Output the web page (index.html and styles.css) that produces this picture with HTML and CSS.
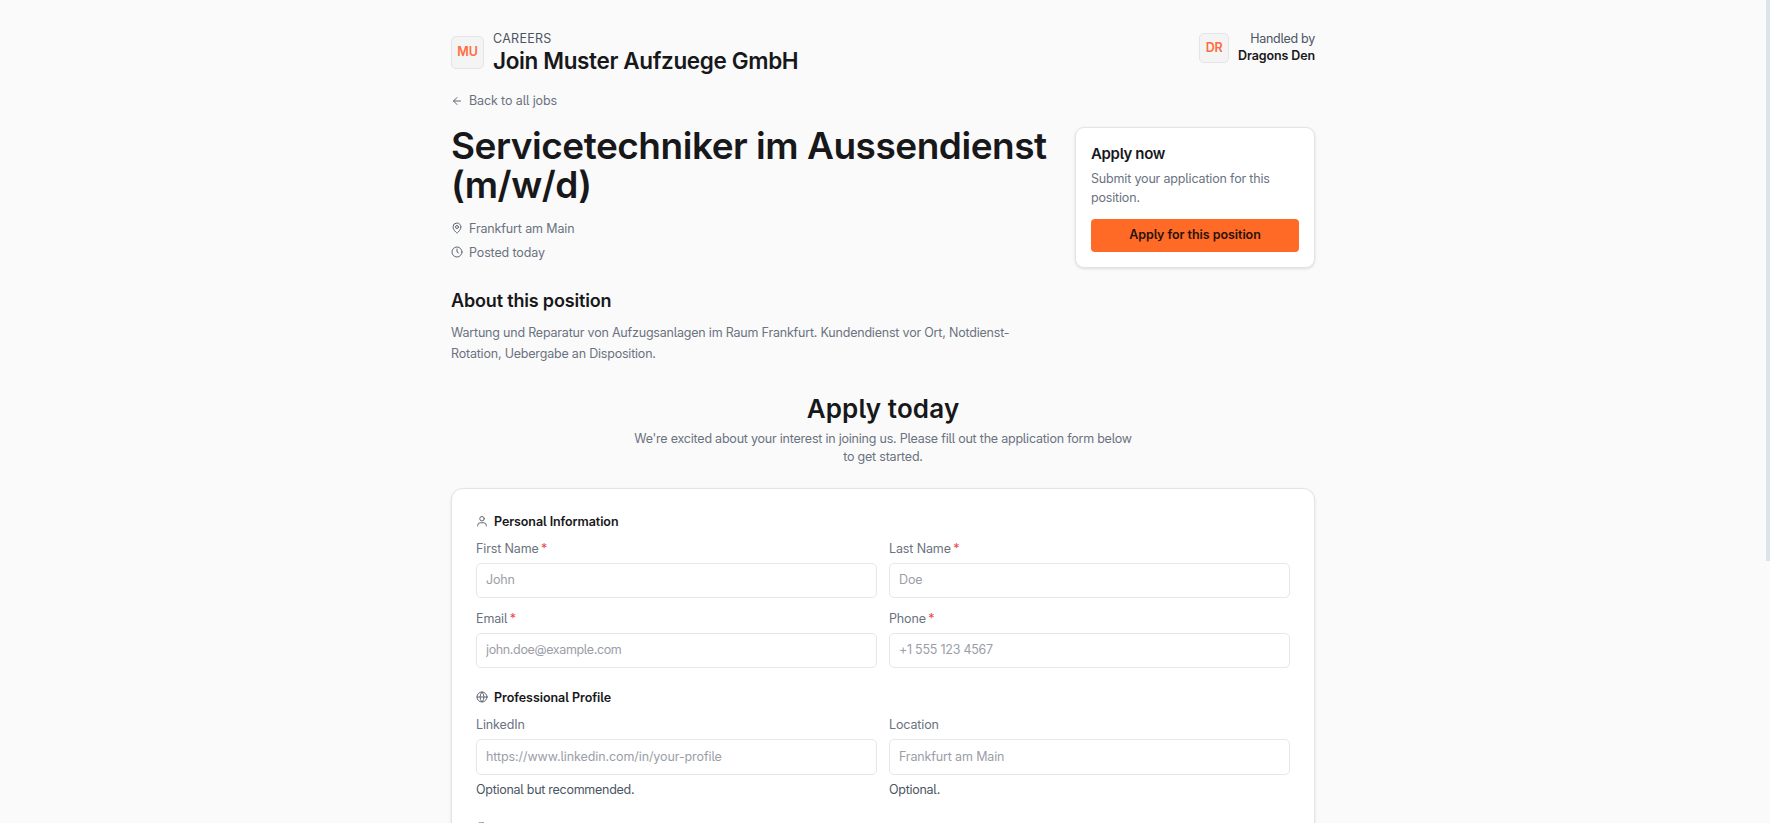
FILE: index.html
```
<!DOCTYPE html>
<html lang="en">
<head>
<meta charset="utf-8">
<title>Servicetechniker im Aussendienst (m/w/d)</title>
<link rel="stylesheet" href="styles.css">
</head>
<body>
<div class="page">
  <header class="header">
    <div class="brand">
      <div class="logo">MU</div>
      <div>
        <div class="eyebrow">CAREERS</div>
        <div class="company">Join Muster Aufzuege GmbH</div>
      </div>
    </div>
    <div class="handler">
      <div class="logo logo-small">DR</div>
      <div class="handler-text">
        <div class="handler-label">Handled by</div>
        <div class="handler-name">Dragons Den</div>
      </div>
    </div>
  </header>

  <a class="back">
    <svg class="icon" viewBox="0 0 24 24"><path d="m12 19-7-7 7-7"/><path d="M19 12H5"/></svg>
    <span>Back to all jobs</span>
  </a>

  <main>
    <div class="job">
      <div>
        <h1>Servicetechniker im Aussendienst (m/w/d)</h1>
        <div class="meta">
          <svg class="icon" viewBox="0 0 24 24"><path d="M20 10c0 4.993-5.539 10.193-7.399 11.799a1 1 0 0 1-1.202 0C9.539 20.193 4 14.993 4 10a8 8 0 0 1 16 0"/><circle cx="12" cy="10" r="3"/></svg>
          <span>Frankfurt am Main</span>
        </div>
        <div class="meta">
          <svg class="icon" viewBox="0 0 24 24"><circle cx="12" cy="12" r="10"/><path d="M12 6v6l3 2"/></svg>
          <span>Posted today</span>
        </div>
        <h2 class="about-title">About this position</h2>
        <p class="about-text">Wartung und Reparatur von Aufzugsanlagen im Raum Frankfurt. Kundendienst vor Ort, Notdienst-<br>Rotation, Uebergabe an Disposition.</p>
      </div>
      <aside class="apply-card">
        <h3>Apply now</h3>
        <p>Submit your application for this position.</p>
        <button class="apply-button" type="button">Apply for this position</button>
      </aside>
    </div>

    <div class="intro">
      <h2>Apply today</h2>
      <p>We're excited about your interest in joining us. Please fill out the application form below<br>to get started.</p>
    </div>

    <form class="form">
      <section>
        <h4><svg class="icon" viewBox="0 0 24 24"><circle cx="12" cy="7.500" r="4.500"/><path d="M3.500 22v-1.500a5 5 0 0 1 5-5h7a5 5 0 0 1 5 5V22"/></svg><span>Personal Information</span></h4>
        <div class="fields">
          <div class="field"><label for="first">First Name <b>*</b></label><input id="first" placeholder="John"></div>
          <div class="field"><label for="last">Last Name <b>*</b></label><input id="last" placeholder="Doe"></div>
          <div class="field"><label for="email">Email <b>*</b></label><input id="email" class="input-email" placeholder="john.doe@example.com"></div>
          <div class="field"><label for="phone">Phone <b>*</b></label><input id="phone" class="input-phone" placeholder="+1 555 123 4567"></div>
        </div>
      </section>
      <section>
        <h4 class="profile-title"><svg class="icon" viewBox="0 0 24 24"><circle cx="12" cy="12" r="10"/><path d="M12 2a14.500 14.500 0 0 0 0 20 14.500 14.500 0 0 0 0-20"/><path d="M2 12h20"/></svg><span>Professional Profile</span></h4>
        <div class="fields fields-tall">
          <div class="field"><label for="linkedin">LinkedIn</label><input id="linkedin" class="input-url" placeholder="https://www.linkedin.com/in/your-profile"><div class="hint">Optional but recommended.</div></div>
          <div class="field"><label for="location">Location</label><input id="location" placeholder="Frankfurt am Main"><div class="hint">Optional.</div></div>
        </div>
      </section>
      <section class="documents">
        <h4><svg class="icon" viewBox="0 0 24 24"><path d="M15 2H6a2 2 0 0 0-2 2v16a2 2 0 0 0 2 2h12a2 2 0 0 0 2-2V7Z"/><path d="M14 2v4a2 2 0 0 0 2 2h4"/></svg><span>Documents</span></h4>
      </section>
    </form>
  </main>
</div>
<div class="scroll-thumb"></div>
</body>
</html>
```
FILE: styles.css
```
* { box-sizing: border-box; }
html { height: 100%; overflow: hidden; }
body {
  height: 100%;
  margin: 0;
  overflow: hidden;
  background: #fafafa;
  color: #18181b;
  font-family: Inter, "Liberation Sans", sans-serif;
  font-feature-settings: "cv05";
  font-size: 12.5px;
  line-height: 17px;
  letter-spacing: -0.13px;
}
h1, h2, h3, h4, p { margin: 0; font-weight: 600; }
p { font-weight: 400; color: #6b7280; }

.page { width: 864px; margin: 0 0 0 451px; padding-top: 30px; }

.header { display: flex; justify-content: space-between; align-items: flex-start; }
.brand { display: flex; gap: 9px; }
.logo {
  display: flex;
  align-items: center;
  justify-content: center;
  width: 33px;
  height: 33px;
  margin-top: 6px;
  padding-bottom: 2px;
  border: 1px solid #e4e4e7;
  border-radius: 5px;
  background: #f4f4f5;
  color: #ff6b3d;
  font-weight: 600;
  letter-spacing: -0.2px;
}
.logo-small { width: 30px; height: 30px; margin-top: 3px; }
.eyebrow { color: #4b5563; letter-spacing: 0.28px; }
.company { padding-top: 1px; font-size: 22.5px; line-height: 25px; font-weight: 600; letter-spacing: -0.36px; }
.handler { display: flex; gap: 9px; text-align: right; }
.handler-label { color: #4b5563; letter-spacing: -0.27px; }
.handler-name { font-weight: 600; letter-spacing: -0.12px; }

.icon {
  width: 12px;
  height: 12px;
  flex: none;
  fill: none;
  stroke: #5f6673;
  stroke-width: 2;
  stroke-linecap: round;
  stroke-linejoin: round;
}
.back {
  display: flex;
  align-items: center;
  gap: 6px;
  margin-top: 19px;
  color: #6b7280;
  letter-spacing: -0.12px;
}

.job {
  display: grid;
  grid-template-columns: 597px 240px;
  justify-content: space-between;
  align-items: start;
  margin-top: 18px;
}
h1 { margin: -1px -10px 12px 0; font-size: 37px; line-height: 39px; letter-spacing: -0.48px; }
.meta { display: flex; align-items: center; gap: 6px; height: 24px; color: #6b7280; }
.about-title { margin-top: 26px; font-size: 18px; line-height: 22px; letter-spacing: -0.17px; }
.about-text { margin-top: 10px; line-height: 21px; letter-spacing: -0.2px; }

.apply-card {
  padding: 16px 15px 15px;
  border: 1px solid #e4e4e7;
  border-radius: 9px;
  background: #fff;
  box-shadow: 0 1px 3px rgba(0, 0, 0, 0.12);
}
.apply-card h3 { font-size: 15px; line-height: 20px; letter-spacing: -0.33px; }
.apply-card p { margin-top: 5px; line-height: 19px; letter-spacing: -0.17px; }
.apply-button {
  width: 100%;
  height: 33px;
  margin-top: 12px;
  padding: 0 0 2px;
  border: 0;
  border-radius: 4px;
  background: #ff6b26;
  color: #2a1208;
  font: inherit;
  font-weight: 600;
  font-feature-settings: inherit;
  letter-spacing: -0.05px;
}

.intro { margin-top: 30px; text-align: center; }
.intro h2 { font-size: 26px; line-height: 30px; letter-spacing: 0.15px; }
.intro p { margin-top: 6px; line-height: 18.3px; letter-spacing: -0.22px; }

.form {
  display: flex;
  flex-direction: column;
  gap: 21px;
  margin-top: 21px;
  padding: 24px;
  border: 1px solid #e4e4e7;
  border-radius: 12px;
  background: #fff;
  box-shadow: 0 1px 3px rgba(0, 0, 0, 0.1);
}
h4 { display: flex; align-items: center; gap: 6px; letter-spacing: -0.09px; }
.profile-title { letter-spacing: -0.05px; }
.documents { padding-top: 1px; }
.fields { display: grid; grid-template-columns: 1fr 1fr; gap: 12px; margin-top: 10px; }
.field { display: flex; flex-direction: column; gap: 6px; color: #4b5563; }
label { color: #6b7280; }
label b { margin-left: -1px; color: #ef4444; font-weight: 400; }
input {
  width: 100%;
  height: 35px;
  padding: 0 9px 1px;
  border: 1px solid #e5e7eb;
  border-radius: 5px;
  outline: 0;
  background: #fff;
  font: inherit;
  font-feature-settings: inherit;
  letter-spacing: -0.14px;
}
input::placeholder { color: #9b9ea8; opacity: 1; }
.fields-tall input { height: 36px; }
.input-email { letter-spacing: -0.36px; }
.input-phone { letter-spacing: -0.25px; }
.input-url { letter-spacing: -0.09px; }
.hint { letter-spacing: -0.27px; }

/* Scroll thumb resting over the right page edge */
.scroll-thumb { position: fixed; top: 0; right: 0; width: 4px; height: 561px; background: #dbe3eb; }
```
